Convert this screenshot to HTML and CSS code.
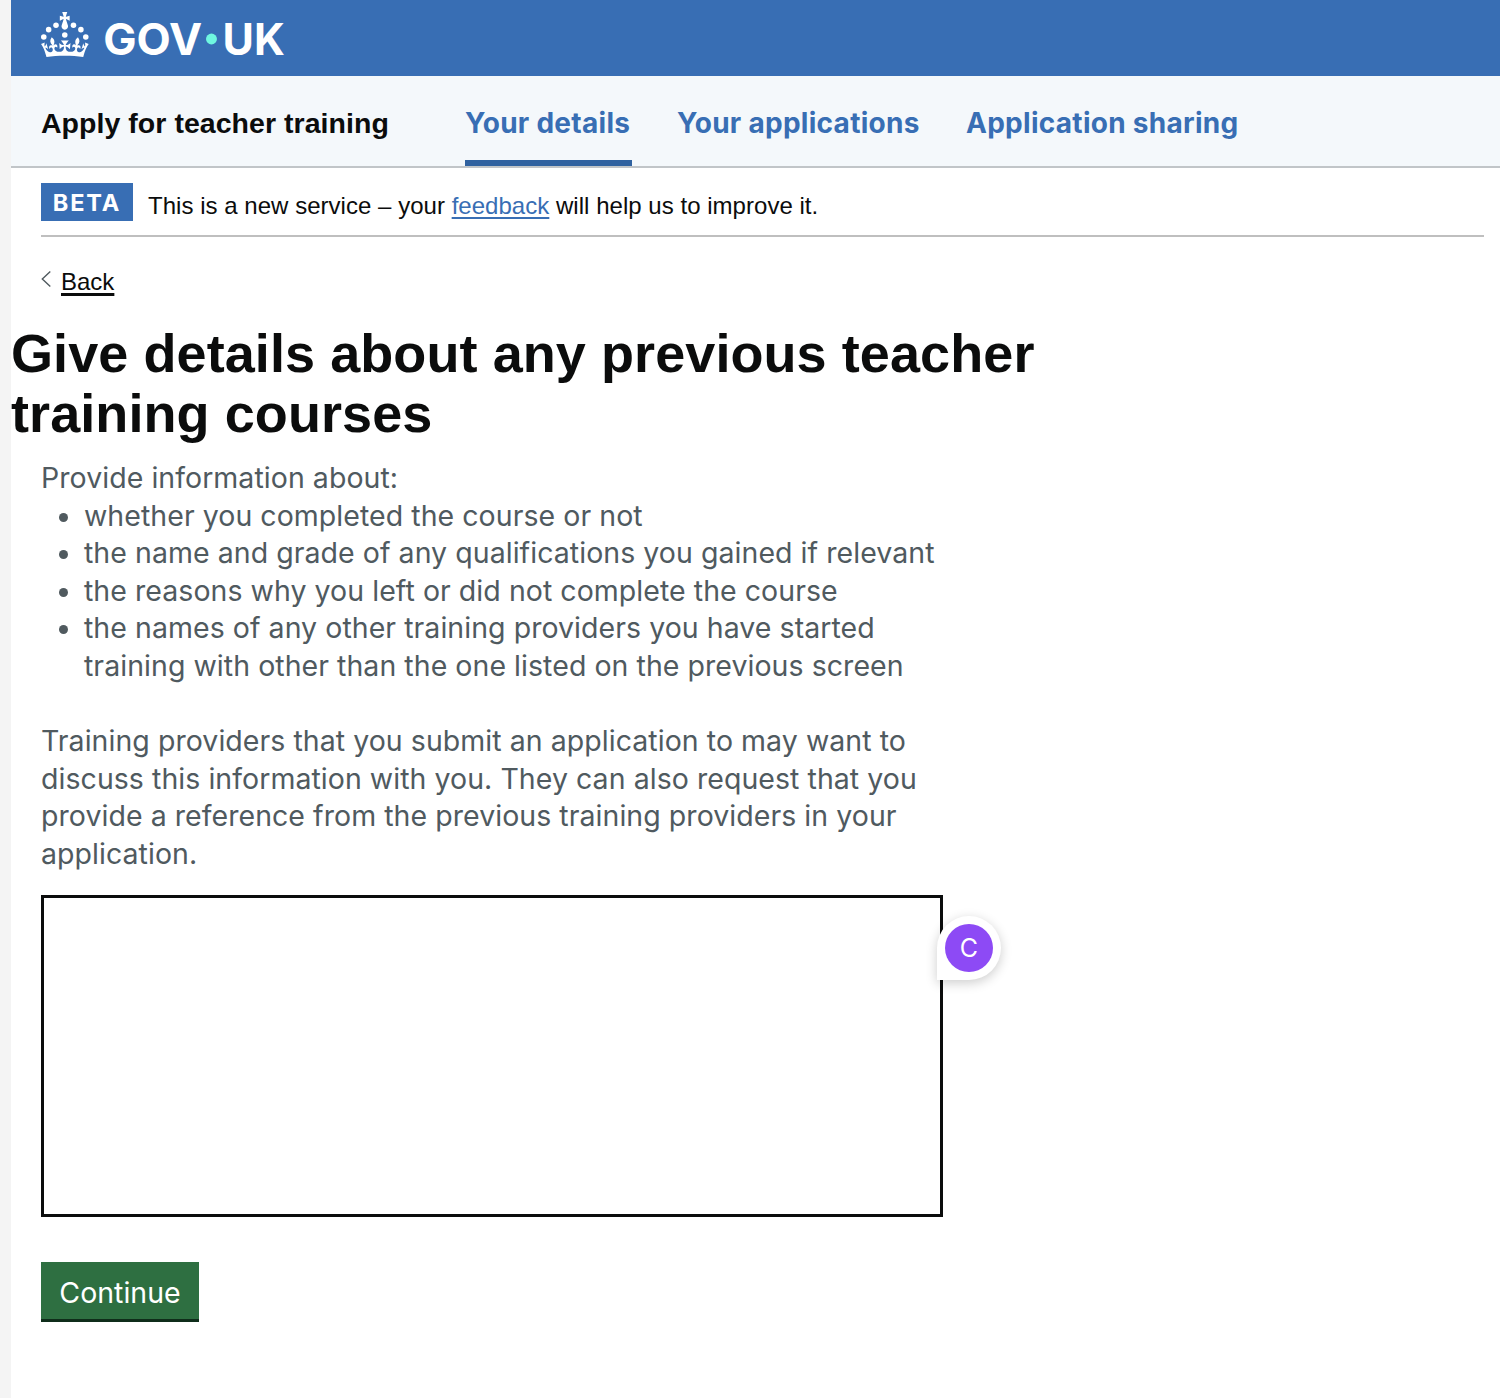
FILE: index.html
```
<!DOCTYPE html>
<html lang="en">
<head>
<meta charset="utf-8">
<title>Give details about any previous teacher training courses</title>
<link rel="stylesheet" href="styles.css">
</head>
<body>
<div class="page">
  <header class="header">
    <svg class="logo" viewBox="0 0 324 60" role="img" aria-label="GOV.UK">
      <g fill="#fff">
        <circle cx="20" cy="17.6" r="3.7"/><circle cx="10.2" cy="23.5" r="3.7"/><circle cx="3.7" cy="33.2" r="3.7"/><circle cx="31.7" cy="30.6" r="3.7"/><circle cx="43.3" cy="17.6" r="3.7"/><circle cx="53.2" cy="23.5" r="3.7"/><circle cx="59.7" cy="33.2" r="3.7"/>
        <path d="M33.1,9.8c.2-.1.3-.3.5-.5l4.6,2.4v-6.8l-4.6,1.5c-.1-.2-.3-.3-.5-.5l1.9-5.9h-6.7l1.9,5.9c-.2.1-.3.3-.5.5l-4.6-1.5v6.8l4.6-2.4c.1.2.3.3.5.5l-2.6,8c-.9,2.8,1.2,5.7,4.1,5.7h0c3,0,5.1-2.9,4.1-5.7l-2.6-8ZM37,37.9s-3.4,3.8-4.1,6.1c2.2,0,4.2-.5,6.4-2.8l-.7,8.5c-2-2.8-4.4-4.1-5.7-3.8.1,3.1.5,6.7,5.8,7.2,3.7.3,6.7-1.5,7-3.8.4-2.6-2-4.3-3.7-1.6-1.4-4.5,2.4-6.1,4.9-3.2-1.9-4.5-1.8-7.7,2.4-10.9,3,4,2.6,7.3-1.2,11.1,2.4-1.3,6.2,0,4,4.6-1.2-2.8-3.7-2.2-4.2.2-.3,1.7.7,3.7,3,4.2,1.9.3,4.7-.9,7-5.9-1.3,0-2.4.7-3.9,1.7l2.4-8c.6,2.3,1.4,3.7,2.2,4.5.6-1.6.5-2.8,0-5.3l5,1.8c-2.6,3.6-5.2,8.7-7.3,17.5-7.4-1.1-15.7-1.7-24.5-1.7h0c-8.8,0-17.1.6-24.5,1.7-2.1-8.9-4.7-13.9-7.3-17.5l5-1.8c-.5,2.5-.6,3.7,0,5.3.8-.8,1.6-2.3,2.2-4.5l2.4,8c-1.5-1-2.6-1.7-3.9-1.7,2.3,5,5.2,6.2,7,5.9,2.3-.4,3.3-2.4,3-4.2-.5-2.4-3-3.1-4.2-.2-2.2-4.6,1.6-6,4-4.6-3.7-3.7-4.2-7.1-1.2-11.1,4.2,3.2,4.3,6.4,2.4,10.9,2.5-2.8,6.3-1.3,4.9,3.2-1.8-2.7-4.1-1-3.7,1.6.3,2.3,3.3,4.1,7,3.8,5.4-.5,5.7-4.2,5.8-7.2-1.3-.2-3.7,1-5.7,3.8l-.7-8.5c2.2,2.3,4.2,2.7,6.4,2.8-.7-2.3-4.1-6.1-4.1-6.1h10.6,0Z"/>
        <text class="wordmark" x="83" y="57.3" textLength="132" lengthAdjust="spacingAndGlyphs">GOV</text>
        <text class="wordmark" x="242" y="57.3" textLength="83" lengthAdjust="spacingAndGlyphs">UK</text>
      </g>
      <circle cx="227.300" cy="36" r="7.3" fill="#6ff7e0"/>
    </svg>
  </header>
  <nav class="nav">
    <span class="service">Apply for teacher training</span>
    <a class="tab tab-current t1">Your details</a>
    <a class="tab t2">Your applications</a>
    <a class="tab t3">Application sharing</a>
  </nav>
  <div class="phase">
    <strong class="tag">BETA</strong>
    <span class="phase-text">This is a new service – your <a class="link">feedback</a> will help us to improve it.</span>
  </div>
  <div class="back">
    <svg class="chevron" viewBox="0 0 10 18"><path d="M9.300 1.500 1.300 9l8 7.500" fill="none" stroke="#505a5f" stroke-width="1.400"/></svg>
    <a class="back-link">Back</a>
  </div>
  <h1 class="title">Give details about any previous teacher<br>training courses</h1>
  <main class="content">
    <p class="hint">Provide information about:</p>
    <ul class="list">
      <li>whether you completed the course or not</li>
      <li>the name and grade of any qualifications you gained if relevant</li>
      <li>the reasons why you left or did not complete the course</li>
      <li>the names of any other training providers you have started<br>training with other than the one listed on the previous screen</li>
    </ul>
    <p class="hint second">Training providers that you submit an application to may want to<br>discuss this information with you. They can also request that you<br>provide a reference from the previous training providers in your<br>application.</p>
    <div class="field">
      <div class="textarea"></div>
      <div class="marker"><span class="avatar">C</span></div>
    </div>
    <button class="button" type="button">Continue</button>
  </main>
</div>
</body>
</html>
```
FILE: styles.css
```
* { box-sizing: border-box; }
body {
  margin: 0;
  padding-left: 11px;
  background: #f4f4f4;
  color: #0b0c0c;
  font-family: Inter, "Liberation Sans", sans-serif;
}
.page { height: 1398px; background: #fff; overflow: hidden; }
.header { height: 76px; padding: 11.500px 0 0 30px; background: #386eb4; }
.logo { display: block; width: 243px; height: 45px; overflow: visible; }
.wordmark { font: 650 59px Inter, sans-serif; }
.nav {
  display: flex;
  height: 92px;
  padding-left: 30px;
  background: #f4f8fb;
  border-bottom: 2px solid #c1c5c8;
  font-size: 28px;
  font-weight: 700;
  line-height: 36px;
  white-space: nowrap;
}
.service {
  width: 424px;
  padding-top: 29px;
  font: 700 28.5px/36px "Liberation Sans", sans-serif;
  letter-spacing: .04px;
}
.tab { height: 90px; padding-top: 29px; color: #386eb4; letter-spacing: .28px; }
.tab-current { border-bottom: 6px solid #3062a0; }
.t1 { width: 167px; margin-right: 45px; }
.t2 { width: 242px; margin-right: 47px; }
.phase {
  display: flex;
  height: 69px;
  margin: 0 16px 0 30px;
  padding-top: 15px;
  border-bottom: 2px solid #bfbfbf;
}
.tag {
  width: 92px;
  height: 38px;
  margin-right: 15px;
  background: #386eb4;
  color: #fff;
  font-size: 23.5px;
  font-weight: 700;
  line-height: 40px;
  letter-spacing: 1.9px;
  text-align: center;
}
.phase-text { font: 24px/30px "Liberation Sans", sans-serif; padding-top: 8px; letter-spacing: .03px; }
.link {
  color: #386eb4;
  text-decoration: underline;
  text-decoration-thickness: 1.5px;
  text-underline-offset: 3px;
}
.back { display: flex; align-items: flex-start; height: 93px; padding: 30px 0 0 30px; }
.chevron { width: 10px; height: 18px; margin: 3px 10px 0 0; }
.back-link {
  font: 24px/30px "Liberation Sans", sans-serif;
  text-decoration: underline;
  text-decoration-thickness: 2.5px;
  text-underline-offset: 3px;
}
.title {
  margin: -7px 0 0;
  font: 700 54px/60px "Liberation Sans", sans-serif;
  letter-spacing: .08px;
}
.content { padding: 16px 0 0 30px; }
.hint, .list {
  margin: 0;
  color: #505a5f;
  font-size: 28.5px;
  font-weight: 400;
  letter-spacing: .05px;
  line-height: 37.6px;
  white-space: nowrap;
}
.list { padding-left: 43px; }
.second { margin-top: 37.500px; }
.field { position: relative; width: 902px; margin-top: 22.500px; }
.textarea { height: 322px; border: 3px solid #0b0c0c; }
.marker {
  position: absolute;
  left: 896px;
  top: 21px;
  width: 64px;
  height: 64px;
  padding: 8px;
  background: #fff;
  border-radius: 32px 32px 32px 0;
  box-shadow: 0 3px 12px rgba(0, 0, 0, .2);
}
.avatar {
  display: block;
  width: 48px;
  height: 48px;
  border-radius: 50%;
  background: #8d4af5;
  color: #fff;
  font-size: 25px;
  font-weight: 400;
  line-height: 49px;
  text-align: center;
}
.button {
  display: block;
  width: 158px;
  height: 60px;
  margin-top: 45px;
  padding: 5px 0 0;
  border: 0;
  border-bottom: 3px solid #0f2d1a;
  background: #2e6f41;
  color: #fff;
  font: 400 28.5px/36px Inter, sans-serif;
}
```
